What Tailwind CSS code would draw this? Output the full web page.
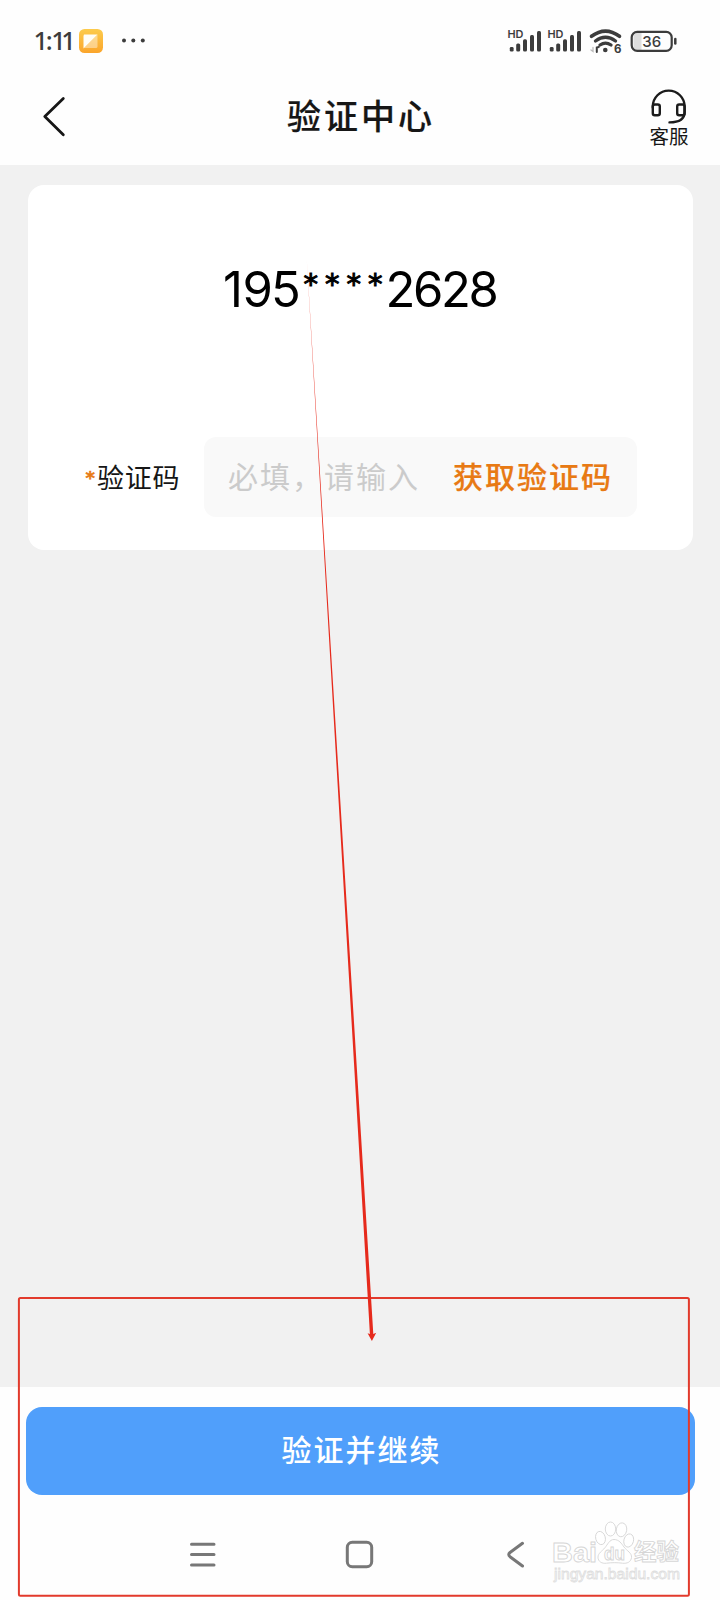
<!DOCTYPE html>
<html lang="zh-CN">
<head>
<meta charset="utf-8">
<meta name="viewport" content="width=720">
<title>验证中心</title>
<script src="https://cdn.jsdelivr.net/npm/@tailwindcss/browser@4"></script>
</head>
<body class="bg-white">
<div class="relative flex h-[1600px] w-[720px] flex-col overflow-hidden bg-[#f1f1f1] font-['Noto_Sans_CJK_SC',sans-serif]">

  <!-- status bar -->
  <div class="flex h-[80px] shrink-0 items-start justify-between bg-[#fefefe] pr-[42px] pl-[34px] text-[#3c3c3c]">
    <svg class="mt-[20px]" width="120" height="40" viewBox="34 20 120 40">
      <defs>
        <linearGradient id="app" x1="0" y1="0" x2="0" y2="1"><stop offset="0" stop-color="#fccb4c"/><stop offset="1" stop-color="#fba52b"/></linearGradient>
      </defs>
      <text x="33.500 45.800 51.300 61.300" y="50" font-family="Noto Sans" font-size="25.500" font-weight="500" fill="#3c3c3c">1:11</text>
      <rect x="79" y="29" width="24" height="24" rx="5.500" fill="url(#app)"/>
      <path d="M84 34.500H97.500L83.500 48.500V36Z" fill="#fffdf5"/>
      <path d="M97.500 34.500V46.500a1.500 1.500 0 0 1-1.500 1.500H90L84 48Z" fill="#fff" fill-opacity=".42"/>
      <circle cx="124" cy="40.500" r="2" fill="#3c3c3c"/><circle cx="133.300" cy="40.500" r="2" fill="#3c3c3c"/><circle cx="142.800" cy="40.500" r="2" fill="#3c3c3c"/>
    </svg>
    <svg class="mt-[20px]" width="174" height="40" viewBox="504 20 174 40" fill="#3c3c3c" stroke-linecap="round">
      <g id="signal">
        <text x="507.500" y="38.200" font-family="Inter" font-size="10.500" font-weight="600" textLength="16" lengthAdjust="spacingAndGlyphs">HD</text>
        <rect x="509.800" y="47" width="3.800" height="4.500" rx="1.300"/>
        <rect x="516.200" y="43.500" width="4" height="8" rx="1.500"/>
        <rect x="523" y="39.300" width="4" height="12.200" rx="1.500"/>
        <rect x="530" y="35" width="4" height="16.500" rx="1.500"/>
        <rect x="537" y="31" width="4" height="20.500" rx="1.500"/>
      </g>
      <use href="#signal" x="40"/>
      <g fill="none" stroke="#3c3c3c">
        <path d="M591.500 36.300Q605.500 25.800 619.500 36.300" stroke-width="3.600"/>
        <path d="M595.500 41Q605.500 33.500 615.500 41" stroke-width="3.400"/>
        <path d="M600 45Q605.500 41.200 611 45" stroke-width="3.300"/>
        <path d="M596.800 52v-4.500l2-.5" stroke-width="2"/>
        <path d="M593 47.500v4l-2-1.500" stroke="#bbb" stroke-width="1.300"/>
      </g>
      <circle cx="605.300" cy="50" r="2.300"/>
      <text x="614" y="52.800" font-family="Inter" font-size="11.500" font-weight="700">6</text>
      <path d="M637.500 33h4v17h-4a4 4 0 0 1-4-4v-9a4 4 0 0 1 4-4Z" fill="#dedede"/>
      <rect x="631.700" y="31.800" width="40" height="19" rx="5.500" fill="none" stroke="#3c3c3c" stroke-width="2.200"/>
      <path d="M675.300 39v4.500" stroke="#3c3c3c" stroke-width="2.500"/>
      <text x="642.200 651.700" y="46.700" font-family="Inter" font-size="15" font-weight="500">36</text>
    </svg>
  </div>

  <!-- title bar -->
  <header class="grid h-[85px] shrink-0 grid-cols-[120px_1fr_120px] bg-[#fefefe] text-[#161616]">
    <svg class="mt-[12px] ml-[40px]" width="30" height="50" viewBox="40 92 30 50" fill="none" stroke="#161616" stroke-width="2.800" stroke-linecap="round" stroke-linejoin="round"><path d="M63.300 98.500 44.800 116.500 63.300 134.800"/></svg>
    <h1 class="pt-[10px] pl-[2px] text-center text-[34px] leading-[50px] font-medium tracking-[3px] [-webkit-text-stroke:0.2px_#161616]">验证中心</h1>
    <div class="flex flex-col items-center pt-[7px] pl-[18px]">
      <svg class="shrink-0" width="40" height="38" viewBox="649 87 40 38" fill="none" stroke="#1c1c1c" stroke-width="2.400" stroke-linecap="round" stroke-linejoin="round">
        <path d="M652.800 107.500V106.500A15.900 15.900 0 0 1 684.600 106.500V112C684.600 118.500 680 122.400 669.500 122.400"/>
        <rect x="652.800" y="104.500" width="7" height="10.800" rx="2"/>
        <rect x="677.200" y="104.500" width="7.400" height="10.800" rx="2"/>
      </svg>
      <span class="-mt-[1px] text-[19.500px] leading-[24px]">客服</span>
    </div>
  </header>

  <!-- verification card -->
  <main class="grow px-[28px] pt-[20px]">
    <section class="h-[365px] w-[665px] rounded-2xl bg-white">
      <div class="flex h-[252px] justify-center pt-[74px] text-black">
        <svg width="280" height="60" viewBox="220 259 280 60" font-family="Inter" font-size="49">
          <text y="307" x="222 241.500 270">195</text>
          <text y="293.500" font-family="DejaVu Sans" font-size="29" stroke="#000" stroke-width="1" x="302.500 324 345.500 367">****</text>
          <text y="307" x="384.500 412 440 467.500">2628</text>
        </svg>
      </div>
      <div class="flex items-center pl-[57px]">
        <span class="w-[12px] pt-[2px] pl-[0.500px] font-['DejaVu_Sans'] text-[18px] leading-[30px] font-bold text-[#e87a14] [-webkit-text-stroke:0.5px_#e87a14]">*</span>
        <span class="w-[107px] text-[27px] leading-[40px] tracking-[0.800px] text-[#161616]">验证码</span>
        <div class="flex h-[80px] w-[433px] items-center rounded-xl bg-[#f9f9f9] pb-[4px] pl-[24px]">
          <span class="w-[225px] text-[30px] leading-[44px] tracking-[2px] whitespace-nowrap text-[#cbcbcb]">必填，请输入</span>
          <button class="text-[30px] leading-[44px] font-medium tracking-[2px] whitespace-nowrap text-[#e87a14] [-webkit-text-stroke:0.2px_#e87a14]">获取验证码</button>
        </div>
      </div>
    </section>
  </main>

  <!-- primary action and system navigation -->
  <footer class="h-[213px] shrink-0 bg-[#fefefe] px-[26px] pt-[20px]">
    <button class="flex h-[88px] w-[669px] items-center justify-center rounded-2xl bg-[#509ffb] pb-[6px] pl-[2px] text-[30px] leading-[44px] font-medium tracking-[2px] text-white">验证并继续</button>
    <svg class="ml-[154px]" width="360" height="105" viewBox="180 1495 360 105" fill="none" stroke="#777" stroke-width="3" stroke-linecap="round" stroke-linejoin="round">
      <path d="M191.500 1544.300h22.500M191.500 1554.600h22.500M191.500 1564.900h22.500"/>
      <rect x="347.300" y="1542.300" width="24.400" height="24.400" rx="5"/>
      <path d="M522.500 1543.300 510 1552.500Q507.500 1554.600 510 1556.700L522.500 1566"/>
    </svg>
  </footer>

  <!-- watermark and hand-drawn annotation -->
  <svg class="pointer-events-none absolute inset-0" width="720" height="1600" viewBox="0 0 720 1600">
    <g fill="#fff" stroke="#d6d6d6" stroke-width=".9">
      <text x="552" y="1561.500" font-family="Liberation Sans" font-size="28" font-weight="700" textLength="45" lengthAdjust="spacingAndGlyphs">Bai</text>
      <ellipse cx="600.500" cy="1538" rx="4.800" ry="6.700" transform="rotate(-15 600.500 1538)"/>
      <ellipse cx="610.500" cy="1529" rx="5.200" ry="7"/>
      <ellipse cx="621.500" cy="1529.800" rx="5.200" ry="7" transform="rotate(10 621.500 1529.800)"/>
      <ellipse cx="628.700" cy="1540.500" rx="4.800" ry="6.700" transform="rotate(15 628.700 1540.500)"/>
      <path d="M614 1539.500c5 0 7.500 4 10 7.500 3 4 8 6 7.500 10.500-.5 4.500-4.500 6.300-9 5.700-5-.7-11-.7-16 0-4.500.6-8.500-1.500-8.500-6 0-4 4-6 7-9.500 2.500-3 4.500-8.200 9-8.200Z"/>
      <text x="604" y="1560" font-family="Liberation Sans" font-size="18" font-weight="700" textLength="21" lengthAdjust="spacingAndGlyphs">du</text>
      <text x="634" y="1560" font-family="Noto Sans CJK SC" font-size="22.500" font-weight="700" textLength="45">经验</text>
    </g>
    <text x="554" y="1579" font-family="Liberation Sans" font-size="14.500" fill="#fff" stroke="#dedede" stroke-width=".8" textLength="126" lengthAdjust="spacingAndGlyphs">jingyan.baidu.com</text>
    <rect x="18.900" y="1297.900" width="670" height="297.800" rx="1.500" fill="none" stroke="#e23a2c" stroke-width="2"/>
    <path d="M306.800 260 369.900 1334 367.600 1333.300 371.900 1341 376.200 1332.800 373.300 1334Z" fill="#e62a1c"/>
  </svg>
</div>
</body>
</html>
